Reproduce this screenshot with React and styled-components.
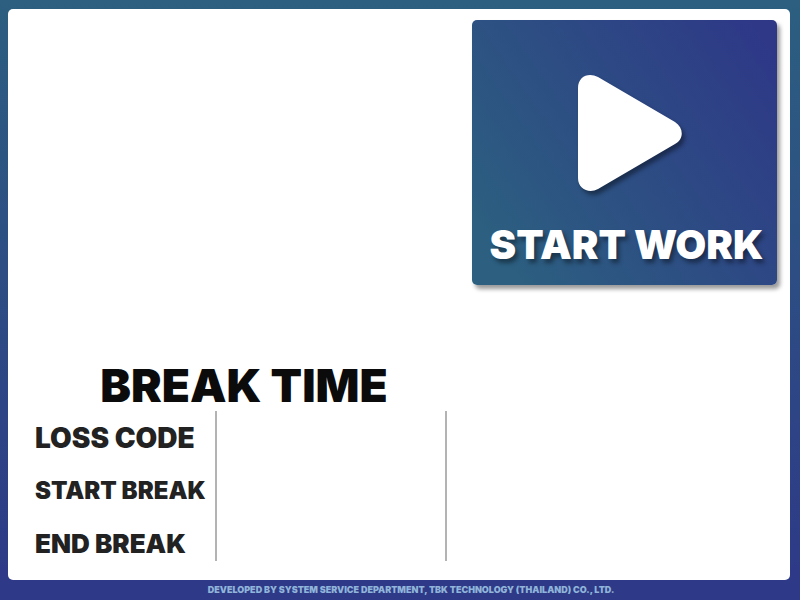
import React from "react";
import styled, { createGlobalStyle } from "styled-components";

const GlobalStyle = createGlobalStyle`
  *, *::before, *::after { box-sizing: border-box; }
  body {
    margin: 0;
    font-family: Inter, "Liberation Sans", sans-serif;
    font-weight: 900;
  }
`;

const Page = styled.div`
  min-height: 100vh;
  display: flex;
  flex-direction: column;
  padding: 9px 10px 0 8px;
  background: linear-gradient(to bottom, #2c5f80, #2e3a87 95%);
`;

const Panel = styled.main`
  flex: 1;
  display: grid;
  grid-template-columns: 3fr 2fr;
  grid-template-rows: 1fr auto;
  padding-bottom: 19px;
  background: #fff;
  border-radius: 5px;
`;

const StartButton = styled.button`
  grid-column: 2;
  align-self: start;
  justify-self: end;
  display: flex;
  flex-direction: column;
  align-items: center;
  width: 305px;
  height: 265px;
  margin: 11px 13px 0 0;
  padding: 54px 0 0 4px;
  border: 0;
  border-radius: 5px;
  background: linear-gradient(55deg, #2c5f80 10%, #2e3887 95%);
  box-shadow: 3px 4px 4px rgba(0, 0, 0, 0.4);
  color: #fff;
  font: inherit;
  font-size: 40px;
  line-height: 50px;
  white-space: nowrap;
  text-shadow: 3px 4px 4px rgba(0, 0, 0, 0.4);
  cursor: pointer;
`;

const PlayIcon = styled.svg`
  display: block;
  width: 106px;
  height: 118px;
  margin: 0 0 28px 6px;
  overflow: visible;
  filter: drop-shadow(3px 4px 2px rgba(0, 0, 0, 0.4));
`;

const BreakSection = styled.section`
  grid-row: 2;
  grid-column: 1 / -1;
  display: grid;
  grid-template-columns: subgrid;
`;

const Title = styled.h1`
  margin: 0;
  padding-left: 8px;
  color: #0b0b0b;
  font-size: 46px;
  font-weight: 900;
  line-height: 52px;
  text-align: center;
  white-space: nowrap;
`;

const BreakTable = styled.table`
  grid-column: 1 / -1;
  width: 100%;
  border-collapse: collapse;
  table-layout: fixed;
`;

const LabelColumn = styled.col`
  width: 208px;
`;

const ValueColumn = styled.col`
  width: 230px;
`;

const Row = styled.tr`
  height: 53px;

  &:last-child {
    height: 44px;
  }
`;

const Label = styled.th`
  padding: 11px 0 0 27px;
  border-right: 2px solid #b3b3b3;
  color: #222;
  font-size: ${({ $size }) => $size}px;
  font-weight: 900;
  line-height: 32px;
  text-align: left;
  vertical-align: top;
  white-space: nowrap;
`;

const Value = styled.td`
  padding: 0;
  border-right: ${({ $last }) => ($last ? "0" : "2px solid #b3b3b3")};
`;

const Footer = styled.footer`
  height: 20px;
  padding-left: 24px;
  color: #90b4da;
  font-size: 9px;
  line-height: 20px;
  text-align: center;
`;

const rows = [
  { label: "LOSS CODE", size: 28 },
  { label: "START BREAK", size: 24 },
  { label: "END BREAK", size: 26 },
];

export default function App() {
  return (
    <>
      <GlobalStyle />
      <Page>
        <Panel>
          <StartButton type="button">
            <PlayIcon viewBox="0 0 106 118" aria-hidden="true">
              <path
                d="M1 14 C1 2 12 -2 21 3 L98 48 C107 54 107 65 98 70 L21 115 C12 120 1 115 1 104 Z"
                fill="#fff"
              />
            </PlayIcon>
            START WORK
          </StartButton>
          <BreakSection>
            <Title id="break-title">BREAK TIME</Title>
            <BreakTable aria-labelledby="break-title">
              <colgroup>
                <LabelColumn />
                <ValueColumn />
                <col />
              </colgroup>
              <tbody>
                {rows.map(({ label, size }) => (
                  <Row key={label}>
                    <Label scope="row" $size={size}>{label}</Label>
                    <Value />
                    <Value $last />
                  </Row>
                ))}
              </tbody>
            </BreakTable>
          </BreakSection>
        </Panel>
        <Footer>
          DEVELOPED BY SYSTEM SERVICE DEPARTMENT, TBK TECHNOLOGY (THAILAND) CO., LTD.
        </Footer>
      </Page>
    </>
  );
}
